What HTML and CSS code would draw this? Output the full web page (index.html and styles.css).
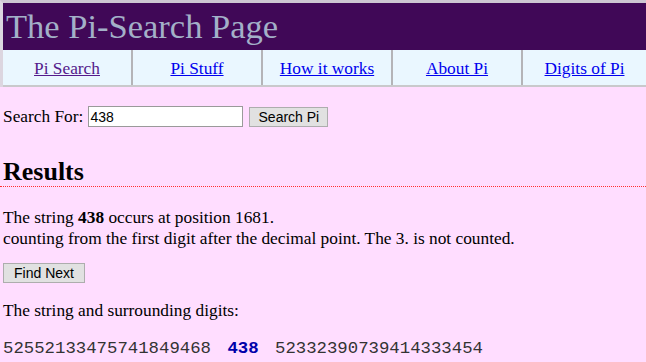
FILE: index.html
```html
<!DOCTYPE html>
<html>
<head>
<meta charset="utf-8">
<title>The Pi-Search Page</title>
<link rel="stylesheet" href="styles.css">
</head>
<body>
<div class="frame">
  <header class="banner">The Pi-Search Page</header>
  <nav class="nav">
    <div class="cell"><a class="visited" href="#">Pi Search</a></div>
    <div class="cell"><a href="#">Pi Stuff</a></div>
    <div class="cell"><a href="#">How it works</a></div>
    <div class="cell"><a href="#">About Pi</a></div>
    <div class="cell last"><a href="#">Digits of Pi</a></div>
  </nav>
</div>
<main class="content">
  <form class="search">
    <label for="q">Search For:</label>
    <input id="q" class="field" type="text" value="438">
    <button type="button" class="btn search-btn">Search Pi</button>
  </form>
  <h2 class="results">Results</h2>
  <p class="found">The string <b>438</b> occurs at position 1681.<br>counting from the first digit after the decimal point. The 3. is not counted.</p>
  <button type="button" class="btn next-btn">Find Next</button>
  <p class="surround">The string and surrounding digits:</p>
  <p class="digits">52552133475741849468 <b class="hit">438</b> 52332390739414333454</p>
</main>
</body>
</html>
```
FILE: styles.css
```css
html, body {
  margin: 0;
  padding: 0;
}
body {
  background: #ffddff;
  font-family: "Liberation Serif", "Times New Roman", serif;
  font-size: 17.33px;
  color: #000;
}
.frame {
  border-top: 3px solid #cdc6d2;
  border-left: 3px solid #dcd6e0;
}
.banner {
  background: #400857;
  color: #a3b0c8;
  font-size: 34.5px;
  line-height: 47px;
  height: 47px;
  padding-left: 3px;
}
.nav {
  display: flex;
  background: #eaf7ff;
  border-bottom: 2px solid #c9c9cc;
  height: 35px;
}
.cell {
  width: 128px;
  border-right: 2px solid #b4b4b8;
  display: flex;
  align-items: center;
  justify-content: center;
  padding-top: 2px;
}
.cell.last {
  flex: 1;
  border-right: 0;
}
.nav a {
  color: #0000ee;
}
.nav a.visited {
  color: #551a8b;
}
.content {
  padding-left: 3px;
}
.search {
  display: flex;
  align-items: center;
  margin: 19px 0 0;
  height: 21px;
}
.search label {
  margin-right: 5px;
}
.field {
  width: 151px;
  height: 17px;
  margin: 0;
  padding: 1px 1px;
  border: 1px solid #9a9a9a;
  font-family: "Liberation Sans", Arial, sans-serif;
  font-size: 14px;
  background: #fff;
}
.btn {
  background: #e1e1e1;
  border: 1px solid #adadad;
  border-radius: 0;
  font-family: "Liberation Sans", Arial, sans-serif;
  font-size: 14px;
  color: #000;
  height: 20px;
  padding: 0 8px;
  margin: 0;
}
.search-btn {
  margin-left: 6px;
  width: 79px;
}
.results {
  margin: 31px 0 0;
  font-size: 26px;
  line-height: 28px;
  border-bottom: 1px dotted #ff3030;
  margin-left: -3px;
  padding-left: 3px;
}
.found {
  margin: 21px 0 0;
  line-height: 20.5px;
}
.next-btn {
  display: block;
  margin-top: 14px;
  width: 82px;
}
.surround {
  margin: 18px 0 0;
  line-height: 20px;
}
.digits {
  margin: 17px 0 0;
  font-family: "Liberation Mono", "Courier New", monospace;
  font-size: 17.33px;
  line-height: 21px;
  color: #333;
  white-space: pre;
}
.hit {
  color: #0000aa;
  margin: 0 6px;
}
```
